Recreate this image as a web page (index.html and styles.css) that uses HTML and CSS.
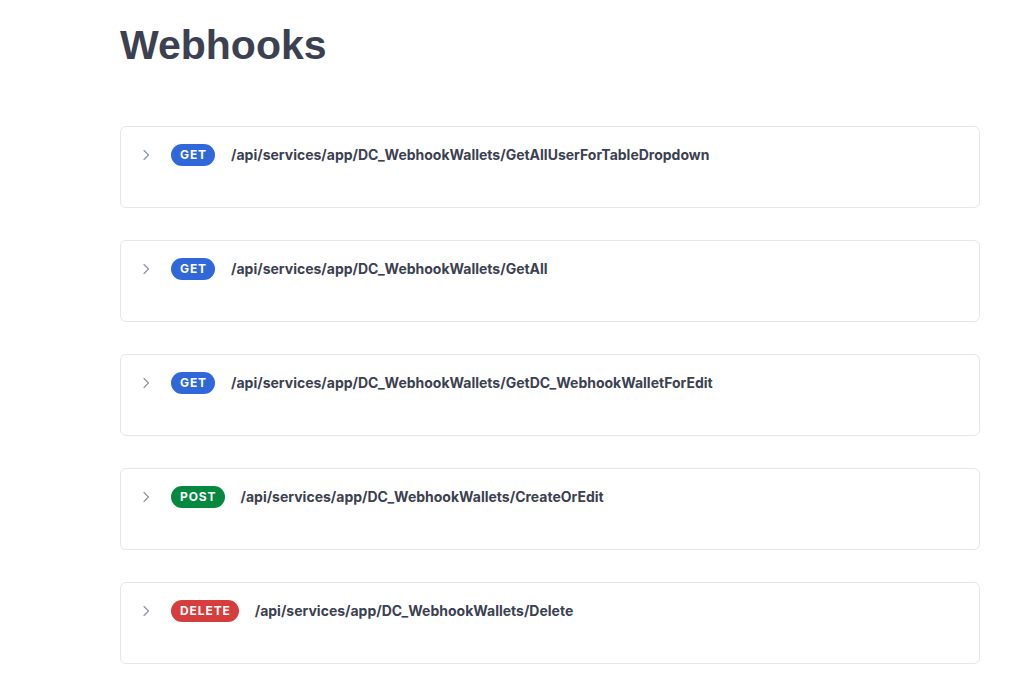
FILE: index.html
```html
<!DOCTYPE html>
<html>
<head>
<meta charset="utf-8">
<link rel="stylesheet" href="styles.css">
</head>
<body>
<main class="page">
  <h1 class="title">Webhooks</h1>
  <div class="list">
    <div class="op">
      <svg class="chev" width="12" height="12" viewBox="0 0 12 12"><path d="M4 1.5 L8.5 6 L4 10.5" fill="none" stroke="#8c94a3" stroke-width="1.2" stroke-linecap="round" stroke-linejoin="round"/></svg>
      <span class="badge get">GET</span>
      <span class="path">/api/services/app/DC_WebhookWallets/GetAllUserForTableDropdown</span>
    </div>
    <div class="op">
      <svg class="chev" width="12" height="12" viewBox="0 0 12 12"><path d="M4 1.5 L8.5 6 L4 10.5" fill="none" stroke="#8c94a3" stroke-width="1.2" stroke-linecap="round" stroke-linejoin="round"/></svg>
      <span class="badge get">GET</span>
      <span class="path">/api/services/app/DC_WebhookWallets/GetAll</span>
    </div>
    <div class="op">
      <svg class="chev" width="12" height="12" viewBox="0 0 12 12"><path d="M4 1.5 L8.5 6 L4 10.5" fill="none" stroke="#8c94a3" stroke-width="1.2" stroke-linecap="round" stroke-linejoin="round"/></svg>
      <span class="badge get">GET</span>
      <span class="path">/api/services/app/DC_WebhookWallets/GetDC_WebhookWalletForEdit</span>
    </div>
    <div class="op">
      <svg class="chev" width="12" height="12" viewBox="0 0 12 12"><path d="M4 1.5 L8.5 6 L4 10.5" fill="none" stroke="#8c94a3" stroke-width="1.2" stroke-linecap="round" stroke-linejoin="round"/></svg>
      <span class="badge post">POST</span>
      <span class="path">/api/services/app/DC_WebhookWallets/CreateOrEdit</span>
    </div>
    <div class="op">
      <svg class="chev" width="12" height="12" viewBox="0 0 12 12"><path d="M4 1.5 L8.5 6 L4 10.5" fill="none" stroke="#8c94a3" stroke-width="1.2" stroke-linecap="round" stroke-linejoin="round"/></svg>
      <span class="badge delete">DELETE</span>
      <span class="path">/api/services/app/DC_WebhookWallets/Delete</span>
    </div>
  </div>
</main>
</body>
</html>
```
FILE: styles.css
```css
html, body {
  margin: 0;
  padding: 0;
  background: #ffffff;
}
.page {
  padding: 0 40px 0 120px;
  width: 860px;
}
.title {
  font-family: "Liberation Sans", Arial, sans-serif;
  font-weight: 700;
  font-size: 41px;
  line-height: 46px;
  color: #3b4151;
  margin: 22px 0 0 0;
}
.list {
  margin-top: 58px;
  display: flex;
  flex-direction: column;
  gap: 32px;
}
.op {
  box-sizing: border-box;
  height: 82px;
  border: 1px solid #e3e7ed;
  border-radius: 6px;
  display: flex;
  align-items: flex-start;
  padding: 17px 20px 0 19px;
}
.chev {
  margin-top: 5px;
  flex: none;
}
.badge {
  margin-left: 19px;
  height: 22px;
  line-height: 22px;
  border-radius: 11px;
  padding: 0 8px 0 9px;
  color: #fff;
  font-family: Inter, sans-serif;
  font-weight: 700;
  font-size: 12px;
  letter-spacing: 0.9px;
  flex: none;
}
.get { background: #3168d9; }
.post { background: #05893f; }
.delete { background: #d63d3d; }
.path {
  margin-left: 16px;
  line-height: 22px;
  font-family: Inter, sans-serif;
  font-weight: 700;
  font-size: 14px;
  color: #3b4151;
}
```
